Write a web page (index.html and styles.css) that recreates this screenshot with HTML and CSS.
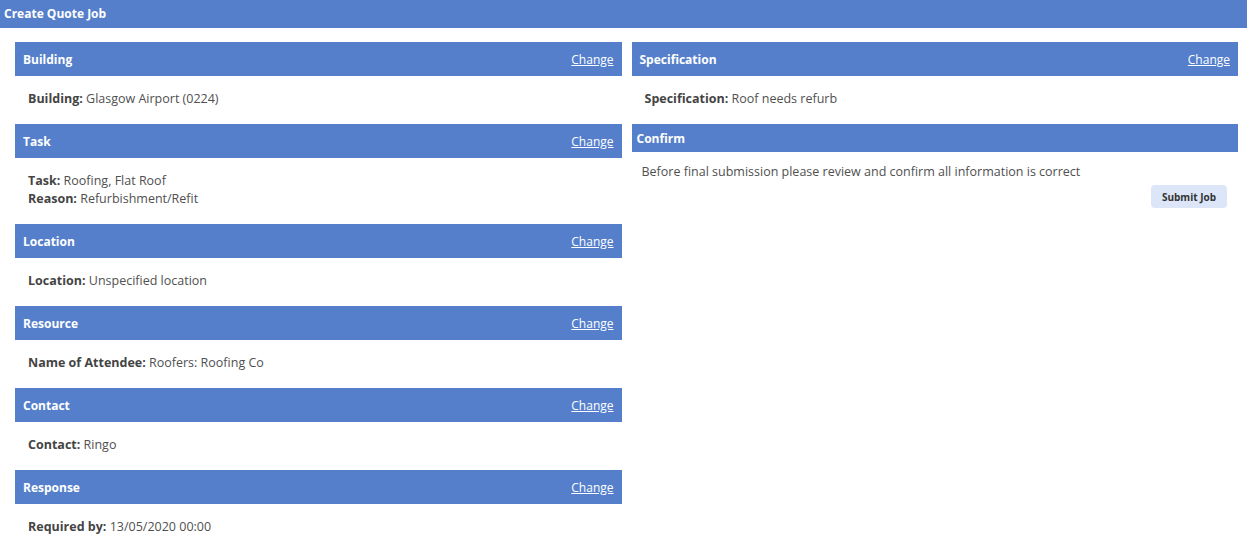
FILE: index.html
```html
<!DOCTYPE html>
<html lang="en">
<head>
    <meta charset="UTF-8">
    <title>Create Quote Job</title>
    <link rel="stylesheet" href="styles.css">
</head>
<body>
    <div class="titlebar">Create Quote Job</div>
    <div class="columns">
        <div class="column">
            <div class="panel">
                <div class="panel-head"><span>Building</span><a href="#">Change</a></div>
                <div class="panel-body"><p><b>Building:</b> Glasgow Airport (0224)</p></div>
            </div>
            <div class="panel">
                <div class="panel-head"><span>Task</span><a href="#">Change</a></div>
                <div class="panel-body">
                    <p><b>Task:</b> Roofing, Flat Roof</p>
                    <p><b>Reason:</b> Refurbishment/Refit</p>
                </div>
            </div>
            <div class="panel">
                <div class="panel-head"><span>Location</span><a href="#">Change</a></div>
                <div class="panel-body"><p><b>Location:</b> Unspecified location</p></div>
            </div>
            <div class="panel">
                <div class="panel-head"><span>Resource</span><a href="#">Change</a></div>
                <div class="panel-body"><p><b>Name of Attendee:</b> Roofers: Roofing Co</p></div>
            </div>
            <div class="panel">
                <div class="panel-head"><span>Contact</span><a href="#">Change</a></div>
                <div class="panel-body"><p><b>Contact:</b> Ringo</p></div>
            </div>
            <div class="panel">
                <div class="panel-head"><span>Response</span><a href="#">Change</a></div>
                <div class="panel-body"><p><b>Required by:</b> 13/05/2020 00:00</p></div>
            </div>
        </div>
        <div class="column">
            <div class="panel">
                <div class="panel-head"><span>Specification</span><a href="#">Change</a></div>
                <div class="panel-body"><p><b>Specification:</b> Roof needs refurb</p></div>
            </div>
            <div class="panel confirm">
                <div class="panel-head"><span>Confirm</span></div>
                <div class="panel-body">
                    <p>Before final submission please review and confirm all information is correct</p>
                    <div class="actions"><button type="button">Submit Job</button></div>
                </div>
            </div>
        </div>
    </div>
</body>
</html>
```

FILE: styles.css
```css
body {
    margin: 0;
    font-family: "Open Sans", "Noto Sans", sans-serif;
    font-size: 12px;
    color: #505050;
    background: #fff;
}
.titlebar {
    background-color: rgb(85, 127, 203);
    color: #fff;
    font-weight: bold;
    height: 28px;
    line-height: 28px;
    padding-left: 4px;
}
.columns {
    display: flex;
    gap: 10px;
    padding: 14px 9px 0 15px;
}
.column {
    flex: 1;
    display: flex;
    flex-flow: column;
}
.panel-head {
    display: flex;
    justify-content: space-between;
    align-items: center;
    background-color: rgb(85, 127, 203);
    color: #fff;
    font-weight: bold;
    height: 34px;
    padding: 0 8px;
}
.panel-head a {
    color: #fff;
    font-weight: normal;
}
.panel-body {
    padding: 14px 13px 16px;
    font-size: 12.5px;
}
.panel-body p {
    margin: 0;
    line-height: 18px;
}
.panel-body b { color: #444; }
.confirm .panel-head {
    height: 28px;
    padding: 0 5px;
}
.confirm .panel-body { padding: 11px 11px 10px 10px; }
.actions {
    display: flex;
    justify-content: flex-end;
    margin-top: 4px;
}
.actions button {
    font-family: inherit;
    font-size: 10px;
    font-weight: bold;
    color: #333;
    background-color: rgb(220, 230, 248);
    border: none;
    border-radius: 4px;
    height: 23px;
    padding: 0 11px;
}
```
